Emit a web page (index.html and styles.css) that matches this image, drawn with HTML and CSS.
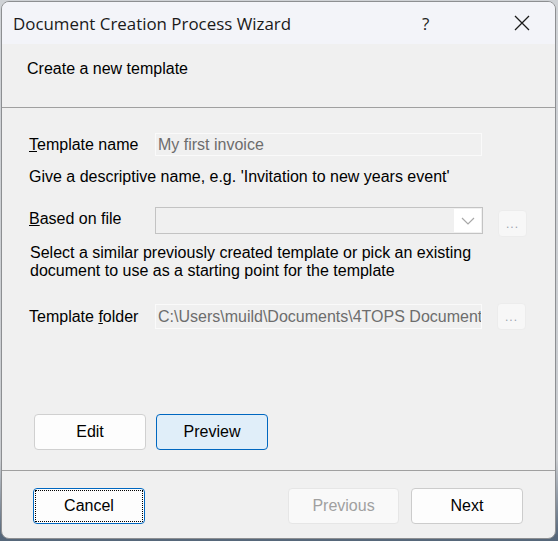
FILE: index.html
```html
<!DOCTYPE html>
<html>
<head>
<meta charset="utf-8">
<link rel="stylesheet" href="styles.css">
</head>
<body>
<div class="window">
  <div class="titlebar">
    <span class="title">Document Creation Process Wizard</span>
    <span class="help">?</span>
    <span class="close">
      <svg width="16" height="16" viewBox="0 0 16 16"><path d="M1 1 L15 15 M15 1 L1 15" stroke="#1a1a1a" stroke-width="1.3" fill="none"/></svg>
    </span>
  </div>
  <div class="header">Create a new template</div>
  <div class="content">
    <div class="row row-name">
      <span class="label"><u>T</u>emplate name</span>
      <div class="field">My first invoice</div>
    </div>
    <div class="hint hint-name">Give a descriptive name, e.g. 'Invitation to new years event'</div>
    <div class="row row-file">
      <span class="label"><u>B</u>ased on file</span>
      <div class="select">
        <div class="select-value"></div>
        <div class="select-arrow">
          <svg width="14" height="8" viewBox="0 0 14 8"><path d="M1 1 L7 7 L13 1" stroke="#a8a8a8" stroke-width="1.2" fill="none"/></svg>
        </div>
      </div>
      <div class="browse browse-file">...</div>
    </div>
    <div class="hint hint-file">Select a similar previously created template or pick an existing<br>document to use as a starting point for the template</div>
    <div class="row row-folder">
      <span class="label">Template <u>f</u>older</span>
      <div class="field field-folder">C:\Users\muild\Documents\4TOPS Document</div>
      <div class="browse browse-folder">...</div>
    </div>
    <div class="actions">
      <button class="btn btn-edit">Edit</button>
      <button class="btn btn-preview">Preview</button>
    </div>
  </div>
  <div class="footer">
    <button class="btn btn-cancel"><span class="focus">Cancel</span></button>
    <div class="spacer"></div>
    <button class="btn btn-prev">Previous</button>
    <button class="btn btn-next">Next</button>
  </div>
</div>
</body>
</html>
```
FILE: styles.css
```css
html, body {
  margin: 0;
  padding: 0;
}
body {
  width: 558px;
  height: 541px;
  background: linear-gradient(#cfd2d6, #c9ccd0 85%, #56677a 99%);
  overflow: hidden;
  font-family: "Liberation Sans", Arial, sans-serif;
  font-size: 16px;
  color: #000;
}
.window {
  margin: 1px 0 0 1px;
  width: 553px;
  height: 536px;
  border: 1px solid #8d8f92;
  border-radius: 8px;
  background: #f0f0f0;
  overflow: hidden;
  display: flex;
  flex-direction: column;
}
.titlebar {
  height: 42px;
  background: #f3f4f9;
  display: flex;
  align-items: center;
  flex: none;
}
.title {
  font-family: "Open Sans", "Noto Sans", sans-serif;
  font-size: 16.9px;
  color: #1a1a1a;
  margin-left: 11px;
  flex: 1;
}
.help {
  font-family: "Open Sans", "Noto Sans", sans-serif;
  font-size: 17px;
  color: #222;
  width: 20px;
  margin-right: 72px;
}
.close {
  display: flex;
  margin-right: 25px;
}
.header {
  height: 64px;
  border-bottom: 1px solid #a0a0a0;
  box-sizing: border-box;
  padding: 16px 0 0 25px;
  flex: none;
}
.content {
  height: 363px;
  border-bottom: 1px solid #a0a0a0;
  box-sizing: border-box;
  flex: none;
  padding-left: 27px;
}
.row {
  display: flex;
  align-items: flex-start;
}
.label {
  width: 126px;
  flex: none;
  line-height: 18px;
}
.row-name {
  margin-top: 25px;
  align-items: center;
}
.field {
  width: 327px;
  height: 23px;
  box-sizing: border-box;
  border: 1px solid #fafafa;
  background: #f0f0f0;
  color: #6d6d6d;
  line-height: 21px;
  padding-left: 2px;
  white-space: nowrap;
  overflow: hidden;
}
.hint {
  line-height: 18px;
}
.hint-name {
  margin-top: 12px;
}
.row-file {
  margin-top: 21px;
}
.row-file .label {
  margin-top: 3px;
}
.select {
  width: 328px;
  height: 27px;
  box-sizing: border-box;
  border: 1px solid #c3c3c3;
  background: #f0f0f0;
  display: flex;
  padding: 1px;
}
.select-value {
  flex: 1;
}
.select-arrow {
  width: 27px;
  background: #fff;
  display: flex;
  align-items: center;
  justify-content: center;
}
.browse {
  width: 29px;
  height: 27px;
  box-sizing: border-box;
  margin-left: 15px;
  border: 1px solid #ececec;
  border-radius: 4px;
  background: #f7f7f7;
  color: #9aa3b0;
  font-size: 12px;
  text-align: center;
  line-height: 26px;
  letter-spacing: 1px;
}
.browse-file {
  margin-top: 3px;
}
.hint-file {
  margin-top: 7px;
  margin-left: 1px;
}
.row-folder {
  margin-top: 23px;
  align-items: center;
}
.field-folder {
  height: 25px;
  line-height: 23px;
}
.actions {
  margin-top: 84px;
  margin-left: 5px;
  display: flex;
  gap: 10px;
}
.btn {
  font-family: "Liberation Sans", Arial, sans-serif;
  font-size: 16px;
  width: 112px;
  height: 36px;
  box-sizing: border-box;
  border-radius: 4px;
  padding: 0;
  color: #000;
}
.btn-edit {
  background: #fdfdfd;
  border: 1px solid #d0d0d0;
}
.btn-preview {
  background: #e0eef9;
  border: 1px solid #0067c0;
}
.footer {
  flex: 1;
  display: flex;
  align-items: flex-start;
  padding: 17px 0 0 31px;
}
.btn-cancel {
  background: #fdfdfd;
  border: 1px solid #0067c0;
  padding: 1px;
  display: flex;
}
.btn-cancel .focus {
  flex: 1;
  border: 1px dotted #000;
  display: flex;
  align-items: center;
  justify-content: center;
}
.spacer {
  width: 143px;
}
.btn-prev {
  background: #f9f9f9;
  border: 1px solid #e6e6e6;
  color: #a0a0a0;
  width: 111px;
}
.btn-next {
  background: #fdfdfd;
  border: 1px solid #cccccc;
  margin-left: 12px;
}
```
